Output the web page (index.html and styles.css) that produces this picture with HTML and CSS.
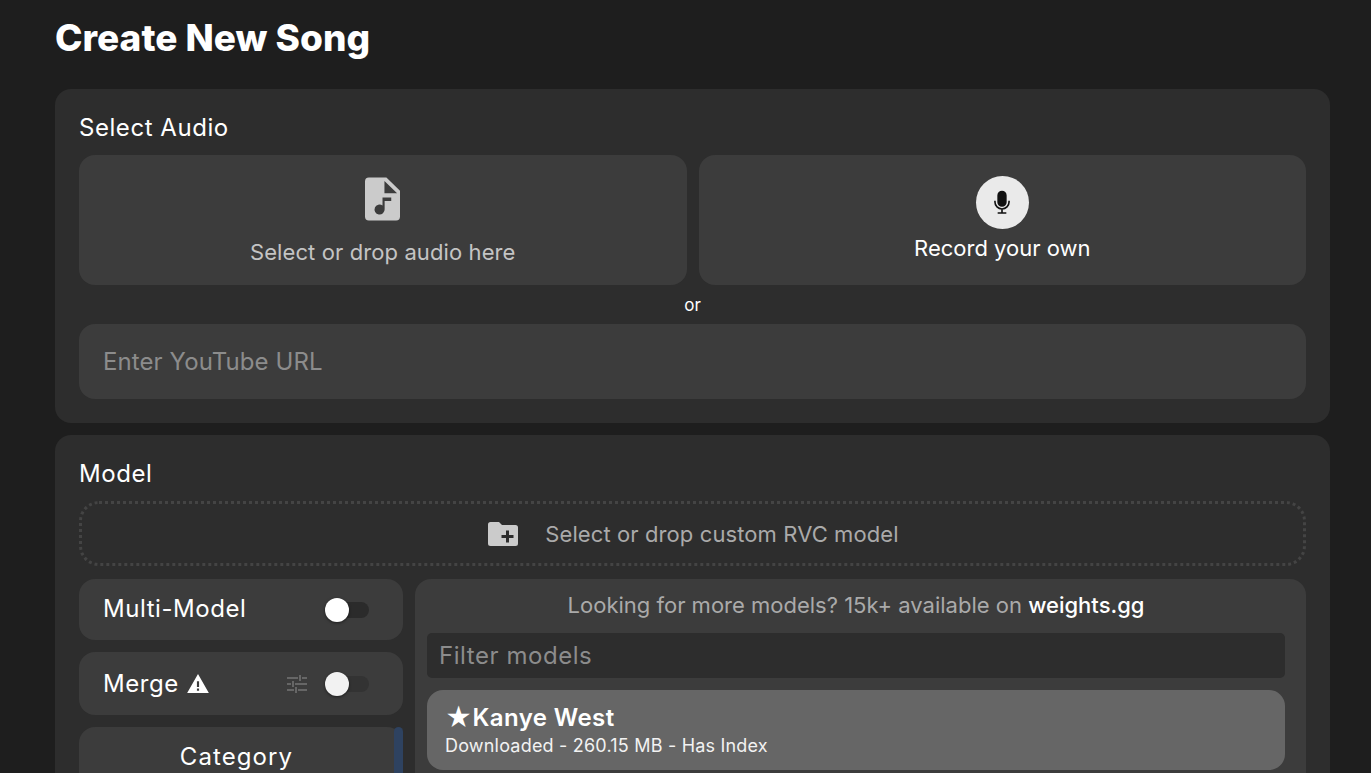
FILE: index.html
```html
<!DOCTYPE html>
<html lang="en">
<head>
<meta charset="utf-8">
<title>Create New Song</title>
<link rel="stylesheet" href="styles.css">
</head>
<body>
<main class="page">
  <h1 class="title">Create New Song</h1>
  <section class="panel audio">
    <h2 class="label">Select Audio</h2>
    <div class="tiles">
      <div class="tile tile-file">
        <svg class="file-icon" viewBox="0 0 36 44"><path fill="#cbcbcb" fill-rule="evenodd" d="M4 0H22L36 13.500V40a4 4 0 0 1-4 4H4a4 4 0 0 1-4-4V4a4 4 0 0 1 4-4ZM20 3.500V16H33ZM18 20.500V28.600a5.200 5.200 0 1 0 2.200 4V24H27V20.500Z"/></svg>
        <span class="tile-text">Select or drop audio here</span>
      </div>
      <div class="tile tile-record">
        <span class="mic"><svg viewBox="0 0 24 24"><path fill="#111" d="M12 15.500a4.300 4.300 0 0 0 4.300-4.300V5a4.300 4.300 0 0 0-8.600 0v6.200a4.300 4.300 0 0 0 4.300 4.300Z"/><path fill="none" stroke="#111" stroke-width="1.500" d="M5.500 10v1a6.500 6.500 0 0 0 13 0v-1M12 17.500V21M8 21.200h8"/></svg></span>
        <span class="tile-strong">Record your own</span>
      </div>
    </div>
    <div class="or">or</div>
    <div class="url">Enter YouTube URL</div>
  </section>
  <section class="panel model">
    <h2 class="label">Model</h2>
    <div class="drop">
      <svg class="folder" viewBox="0 0 30 24"><path fill="#cbcbcb" d="M2.500 0H11L14 3H27.500A2.500 2.500 0 0 1 30 5.500V21.500A2.500 2.500 0 0 1 27.500 24H2.500A2.500 2.500 0 0 1 0 21.500V2.500A2.500 2.500 0 0 1 2.500 0Z"/><path fill="#2d2d2d" d="M18 8.500h3V13h4.500v3H21v4.500h-3V16h-4.500v-3H18Z"/></svg>
      <span>Select or drop custom RVC model</span>
    </div>
    <div class="columns">
      <aside class="side">
        <div class="row row-multi">
          <span class="row-label">Multi-Model</span>
          <span class="switch"><i class="knob"></i></span>
        </div>
        <div class="row row-merge">
          <span class="row-label">Merge</span>
          <svg class="warn" viewBox="0 0 24 21"><path fill="#fff" fill-rule="evenodd" d="M12 0 24 21H0ZM10.800 8v6.500h2.400V8ZM10.800 16v2.400h2.400V16Z"/></svg>
          <svg class="tune" viewBox="0 0 20 18"><path fill="none" stroke="#666" stroke-width="2" d="M0 3H11M15 3H20M13 0V6M0 9H4M8 9H20M6 6V12M0 15H7M11 15H20M9 12V18"/></svg>
          <span class="switch switch-off"><i class="knob knob-off"></i></span>
        </div>
        <div class="category">
          <div class="cat-title">Category</div>
          <div class="scroll"></div>
        </div>
      </aside>
      <div class="models">
        <p class="more">Looking for more models? 15k+ available on <b>weights.gg</b></p>
        <div class="filter">Filter models</div>
        <article class="card">
          <div class="card-title"><span class="star">★</span>Kanye West</div>
          <div class="card-meta">Downloaded - 260.15 MB - Has Index</div>
        </article>
      </div>
    </div>
  </section>
</main>
</body>
</html>
```

FILE: styles.css
```css
* { box-sizing: border-box; }
html, body { margin: 0; height: 773px; overflow: hidden; }
body {
  background: #1e1e1e;
  color: #fff;
  font-family: Inter, "Liberation Sans", sans-serif;
}
.page { width: 1275px; height: 773px; overflow: hidden; margin-left: 55px; display: flex; flex-direction: column; gap: 12px; }
.title { margin: 0 0 5px; height: 72px; flex: none; padding-top: 2px; display: flex; align-items: center; font-size: 37px; font-weight: 800; }
.panel { background: #2d2d2d; border-radius: 16px; padding: 24px; flex: none; }
.audio { height: 334px; }
.model { height: 500px; }
.label { margin: 0; height: 42px; font-size: 24px; font-weight: 400; line-height: 30px; letter-spacing: 0.55px; }
.tiles { display: flex; gap: 12px; height: 130px; }
.tile { flex: 1; background: #3c3c3c; border-radius: 16px; display: flex; flex-direction: column; align-items: center; }
.tile-file { padding-top: 22px; }
.file-icon { width: 35px; height: 44px; }
.tile-text { margin-top: 17px; font-size: 22px; line-height: 28px; letter-spacing: 0.1px; color: #c4c4c4; }
.tile-record { padding-top: 21px; }
.mic { width: 53px; height: 53px; border-radius: 50%; background: #eaeaea; display: flex; align-items: center; justify-content: center; }
.mic svg { width: 26px; height: 26px; }
.tile-strong { margin-top: 5px; font-size: 22px; line-height: 28px; font-weight: 400; }
.or { height: 39px; display: flex; align-items: center; justify-content: center; font-size: 17px; }
.url { height: 75px; background: #3c3c3c; border-radius: 16px; padding: 0 24px; display: flex; align-items: center; font-size: 24px; letter-spacing: 0.1px; color: #8c8c8c; }
.drop { height: 65px; border: 3px dotted #444; border-radius: 20px; display: flex; align-items: center; justify-content: center; gap: 27px; font-size: 22px; letter-spacing: 0.1px; color: #aaa; padding-left: 2px; }
.folder { width: 30px; height: 24px; }
.columns { display: flex; gap: 12px; margin-top: 13px; }
.side { width: 324px; flex: none; display: flex; flex-direction: column; gap: 12px; }
.row { background: #3c3c3c; border-radius: 16px; display: flex; align-items: center; padding: 0 34px 0 24px; }
.row-multi { height: 61px; justify-content: space-between; }
.row-merge { height: 63px; }
.row-label { font-size: 24px; font-weight: 400; letter-spacing: 0.55px; position: relative; top: -1px; }
.row-merge .row-label { top: 0; }
.warn { width: 22px; height: 19px; margin-left: 8px; }
.tune { width: 20px; height: 18px; margin-left: auto; margin-right: 18px; }
.switch { width: 44px; height: 16px; border-radius: 8px; background: #2b2b2b; position: relative; display: block; }
.switch-off { background: #333; }
.knob { position: absolute; left: 0; top: -4px; width: 24px; height: 24px; border-radius: 50%; background: #fff; box-shadow: 0 1px 3px rgba(0,0,0,.5); }
.knob-off { background: #f2f2f2; }
.category { height: 200px; background: #3c3c3c; border-radius: 16px; position: relative; padding: 14px 9px 0 0; }
.cat-title { text-align: center; font-size: 24px; font-weight: 400; line-height: 32px; letter-spacing: 1.1px; }
.scroll { position: absolute; right: 0; top: 0; width: 9px; height: 100%; border-radius: 5px; background: #2e4260; }
.models { flex: 1; background: #3c3c3c; border-radius: 16px; padding: 11px 21px 12px 12px; height: 300px; }
.more { margin: 0 0 13px; height: 30px; text-align: center; font-size: 22px; line-height: 30px; color: #aaa; }
.more b { font-weight: 500; color: #fff; }
.filter { height: 45px; background: #2d2d2d; border-radius: 5px; padding: 0 12px; display: flex; align-items: center; font-size: 24px; letter-spacing: 0.55px; color: #8c8c8c; }
.card { margin-top: 12px; height: 80px; background: #666; border-radius: 16px; padding: 13px 18px 0; }
.card-title { font-size: 24px; font-weight: 600; line-height: 30px; letter-spacing: 0.4px; }
.star { font-size: 26px; line-height: 26px; vertical-align: -1px; }
.card-meta { font-size: 18px; line-height: 24px; margin-top: 1px; letter-spacing: 0.2px; color: #f2f2f2; }
```
